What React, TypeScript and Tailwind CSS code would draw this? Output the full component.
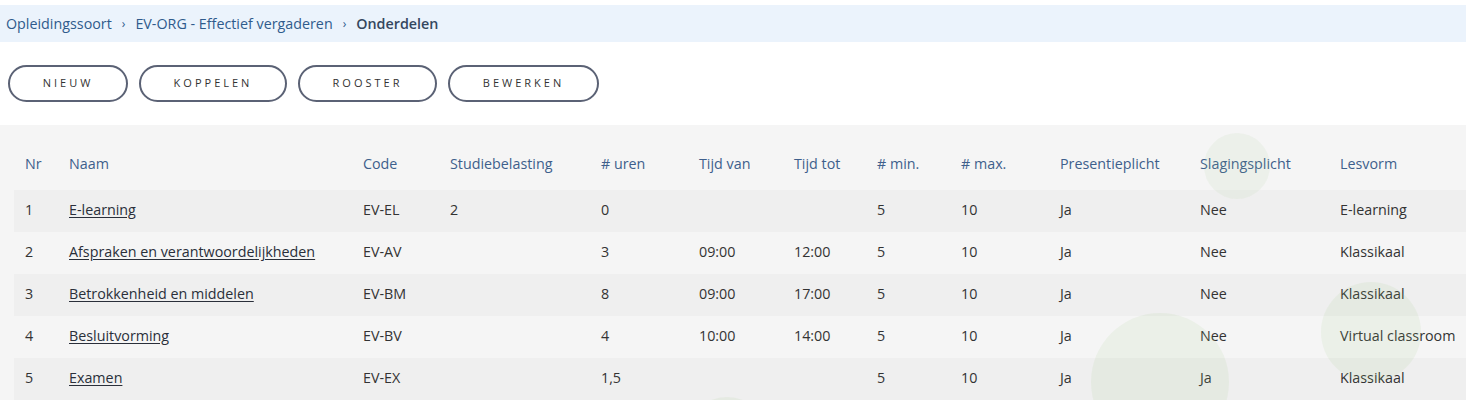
import React from 'react';

interface Onderdeel {
    nr: number;
    naam: string;
    code: string;
    studiebelasting: string;
    uren: string;
    tijdVan: string;
    tijdTot: string;
    min: string;
    max: string;
    presentieplicht: string;
    slagingsplicht: string;
    lesvorm: string;
}

const onderdelen: Onderdeel[] = [
    { nr: 1, naam: 'E-learning', code: 'EV-EL', studiebelasting: '2', uren: '0', tijdVan: '', tijdTot: '', min: '5', max: '10', presentieplicht: 'Ja', slagingsplicht: 'Nee', lesvorm: 'E-learning' },
    { nr: 2, naam: 'Afspraken en verantwoordelijkheden', code: 'EV-AV', studiebelasting: '', uren: '3', tijdVan: '09:00', tijdTot: '12:00', min: '5', max: '10', presentieplicht: 'Ja', slagingsplicht: 'Nee', lesvorm: 'Klassikaal' },
    { nr: 3, naam: 'Betrokkenheid en middelen', code: 'EV-BM', studiebelasting: '', uren: '8', tijdVan: '09:00', tijdTot: '17:00', min: '5', max: '10', presentieplicht: 'Ja', slagingsplicht: 'Nee', lesvorm: 'Klassikaal' },
    { nr: 4, naam: 'Besluitvorming', code: 'EV-BV', studiebelasting: '', uren: '4', tijdVan: '10:00', tijdTot: '14:00', min: '5', max: '10', presentieplicht: 'Ja', slagingsplicht: 'Nee', lesvorm: 'Virtual classroom' },
    { nr: 5, naam: 'Examen', code: 'EV-EX', studiebelasting: '', uren: '1,5', tijdVan: '', tijdTot: '', min: '5', max: '10', presentieplicht: 'Ja', slagingsplicht: 'Ja', lesvorm: 'Klassikaal' },
];

const columns = [
    { label: 'Nr', width: 'w-[44px]' },
    { label: 'Naam', width: 'w-[294px]' },
    { label: 'Code', width: 'w-[87px]' },
    { label: 'Studiebelasting', width: 'w-[151px]' },
    { label: '# uren', width: 'w-[98px]' },
    { label: 'Tijd van', width: 'w-[95px]' },
    { label: 'Tijd tot', width: 'w-[83px]' },
    { label: '# min.', width: 'w-[84px]' },
    { label: '# max.', width: 'w-[99px]' },
    { label: 'Presentieplicht', width: 'w-[140px]' },
    { label: 'Slagingsplicht', width: 'w-[140px]' },
    { label: 'Lesvorm', width: 'w-[137px]' },
];

const buttons = [
    { label: 'Nieuw', width: 'w-[120px]' },
    { label: 'Koppelen', width: 'w-[148px]' },
    { label: 'Rooster', width: 'w-[139px]' },
    { label: 'Bewerken', width: 'w-[151px]' },
];

const App: React.FC = () => {
    return (
        <div className="min-h-[400px] bg-white font-['Open_Sans',sans-serif] text-[14.3px] text-[#333] overflow-hidden">
            {/* breadcrumb */}
            <nav className="mt-[5px] h-[37px] bg-[#ebf3fc] flex items-center pl-[6px] text-[#2f5b8c]">
                <span>Opleidingssoort</span>
                <span className="px-[10px] text-[12px]">›</span>
                <span>EV-ORG - Effectief vergaderen</span>
                <span className="px-[10px] text-[12px]">›</span>
                <span className="font-semibold text-[#34475f]">Onderdelen</span>
            </nav>

            <div className="flex gap-[11px] pl-[8px] mt-[23px]">
                {buttons.map(b => (
                    <button
                        key={b.label}
                        className={`${b.width} h-[37px] rounded-full border-2 border-[#5b6275] uppercase text-[11px] tracking-[3px] text-[#333] bg-white`}
                    >
                        {b.label}
                    </button>
                ))}
            </div>

            <section className="relative mt-[23px] bg-[#f5f5f5] pt-[15px] pl-[14px] h-[275px]">
                <table className="table-fixed border-collapse text-left w-[1452px]">
                    <thead>
                        <tr className="h-[50px]">
                            {columns.map(c => (
                                <th key={c.label} className={`${c.width} pl-[11px] pb-[2px] font-normal text-[#3e5f8c] align-middle whitespace-nowrap`}>
                                    {c.label}
                                </th>
                            ))}
                        </tr>
                    </thead>
                    <tbody>
                        {onderdelen.map(o => (
                            <tr key={o.nr} className={`h-[42px] ${o.nr % 2 === 1 ? 'bg-[#efefef]' : 'bg-[#f5f5f5]'} [&>td]:pl-[11px] [&>td]:pb-[3px]`}>
                                <td>{o.nr}</td>
                                <td>
                                    <a href="#" className="underline underline-offset-2 text-[#2a2f3a]">{o.naam}</a>
                                </td>
                                <td>{o.code}</td>
                                <td>{o.studiebelasting}</td>
                                <td>{o.uren}</td>
                                <td>{o.tijdVan}</td>
                                <td>{o.tijdTot}</td>
                                <td>{o.min}</td>
                                <td>{o.max}</td>
                                <td>{o.presentieplicht}</td>
                                <td>{o.slagingsplicht}</td>
                                <td className="whitespace-nowrap">{o.lesvorm}</td>
                            </tr>
                        ))}
                    </tbody>
                </table>

                {/* faint decorative circles */}
                <div className="pointer-events-none absolute left-[1204px] top-[8px] w-[66px] h-[66px] rounded-full bg-[rgba(158,198,132,0.09)]" />
                <div className="pointer-events-none absolute left-[1091px] top-[188px] w-[138px] h-[138px] rounded-full bg-[rgba(158,198,132,0.11)]" />
                <div className="pointer-events-none absolute left-[1321px] top-[157px] w-[100px] h-[100px] rounded-full bg-[rgba(158,198,132,0.11)]" />
                <div className="pointer-events-none absolute left-[684px] top-[272px] w-[86px] h-[86px] rounded-full bg-[rgba(158,198,132,0.11)]" />
            </section>
        </div>
    );
};

export default App;
